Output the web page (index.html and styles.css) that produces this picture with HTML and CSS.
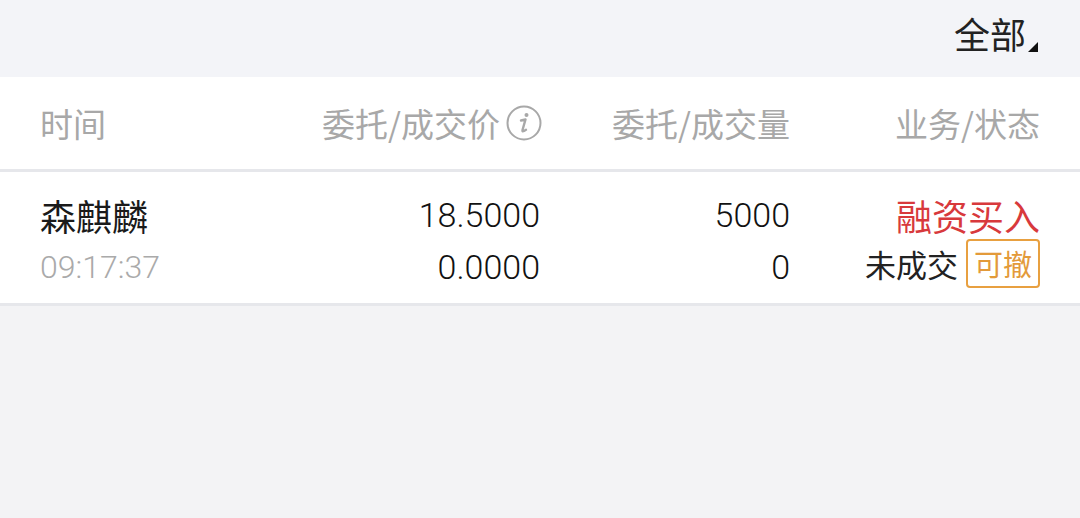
FILE: index.html
```html
<!DOCTYPE html>
<html lang="zh-CN">
<head>
<meta charset="utf-8">
<link rel="stylesheet" href="styles.css">
</head>
<body>
<div class="topbar">
  <span class="filter">全部<span class="tri"></span></span>
</div>
<div class="table">
  <div class="row head">
    <div class="cell left">时间</div>
    <div class="cell right">委托/成交价<svg class="info" width="36" height="36" viewBox="0 0 36 36"><circle cx="18" cy="18" r="16.5" fill="none" stroke="#a8a8a8" stroke-width="2"/><circle cx="20.5" cy="10" r="2" fill="#a8a8a8"/><path d="M15 15.5 L19.5 14.5 L16.5 25 Q16 27 18 26 L20 24.8" fill="none" stroke="#a8a8a8" stroke-width="2.4" stroke-linecap="round" stroke-linejoin="round"/></svg></div>
    <div class="cell right">委托/成交量</div>
    <div class="cell right">业务/状态</div>
  </div>
  <div class="row data">
    <div class="cell left">
      <div class="name">森麒麟</div>
      <div class="time">09:17:37</div>
    </div>
    <div class="cell right">
      <div class="num">18.5000</div>
      <div class="num">0.0000</div>
    </div>
    <div class="cell right">
      <div class="num">5000</div>
      <div class="num">0</div>
    </div>
    <div class="cell right">
      <div class="biz">融资买入</div>
      <div class="status">未成交<span class="badge">可撤</span></div>
    </div>
  </div>
</div>
</body>
</html>
```
FILE: styles.css
```css
* { box-sizing: border-box; }
html, body { margin: 0; padding: 0; }
body {
  width: 1080px;
  height: 518px;
  background: #f3f3f5;
  font-family: "Noto Sans CJK SC", "Noto Sans", sans-serif;
  overflow: hidden;
}
.topbar {
  height: 77px;
  background: #f3f4f8;
  display: flex;
  justify-content: flex-end;
  align-items: center;
  padding-right: 42px;
}
.filter {
  font-size: 36px;
  color: #222;
  line-height: 1;
  display: flex;
  align-items: flex-end;
  margin-top: -12px;
}
.tri {
  width: 0; height: 0;
  border-left: 10px solid transparent;
  border-bottom: 10px solid #111;
  margin-left: 2px;
  margin-bottom: -1px;
}
.table { background: #fff; }
.row {
  display: grid;
  grid-template-columns: 250px 250px 250px 250px;
  padding: 0 40px;
}
.head {
  height: 95px;
  border-bottom: 3px solid #e6e7eb;
  align-items: center;
  color: #a8a8a8;
  font-size: 33px;
}
.head .cell { display: flex; align-items: center; }
.head .right { justify-content: flex-end; }
.info { margin-left: 6px; margin-right: -2px; }
.data {
  height: 134px;
  border-bottom: 3px solid #e6e7eb;
  padding-top: 23px;
}
.cell.right { text-align: right; }
.name { font-size: 36px; color: #1a1a1a; line-height: 40px; height: 40px; }
.time { font-family: Roboto, sans-serif; font-weight: 300; font-size: 32px; color: #aaa; line-height: 40px; margin-top: 12px; }
.num { font-family: Roboto, sans-serif; font-weight: 300; font-size: 34px; color: #111; line-height: 40px; height: 40px; margin-bottom: 12px; }
.biz { font-size: 36px; color: #d8393c; line-height: 40px; height: 40px; }
.status {
  font-size: 31px;
  color: #222;
  display: flex;
  justify-content: flex-end;
  align-items: center;
  margin-top: 4px;
}
.badge {
  margin-left: 8px;
  border: 2px solid #e8a040;
  border-radius: 4px;
  color: #e39a3a;
  font-size: 29px;
  height: 49px;
  width: 74px;
  display: flex;
  align-items: center;
  justify-content: center;
  line-height: 1;
}
```
